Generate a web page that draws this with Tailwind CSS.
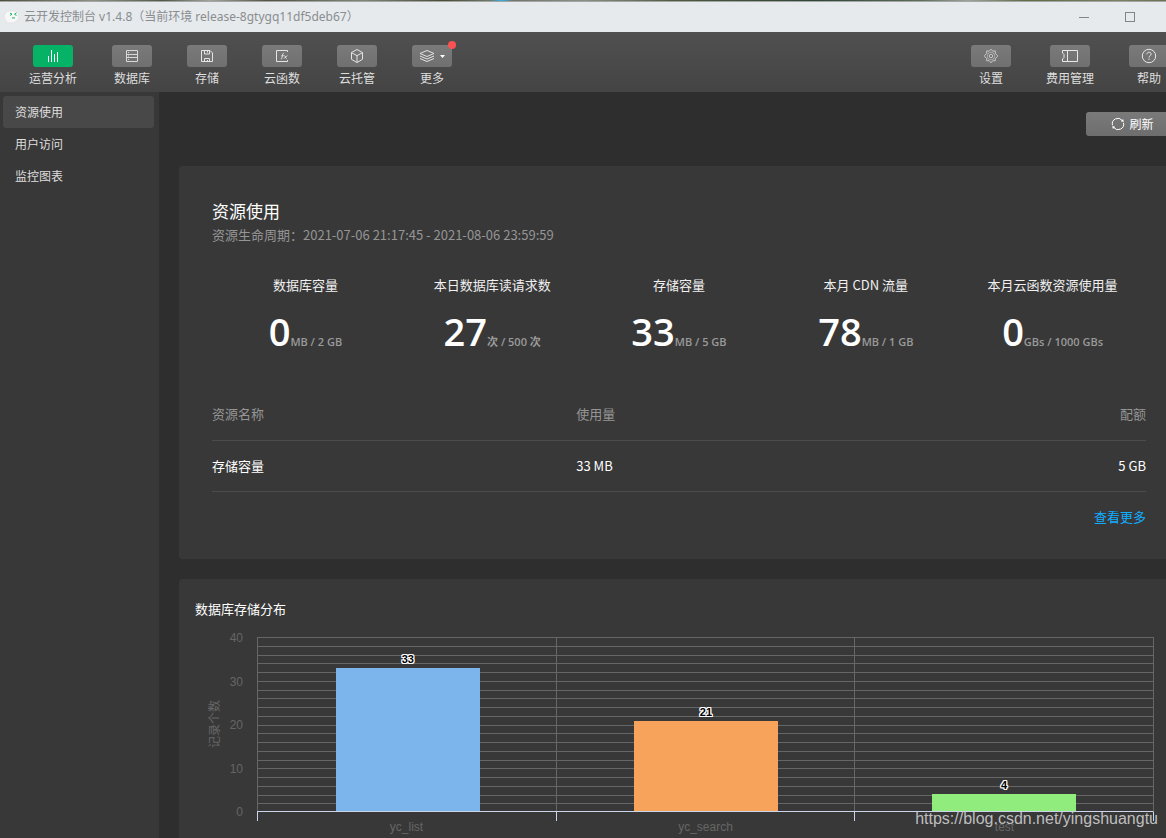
<!DOCTYPE html>
<html lang="zh-CN">
<head>
<meta charset="utf-8">
<title>云开发控制台</title>
<script src="https://cdn.jsdelivr.net/npm/@tailwindcss/browser@4"></script>
</head>
<body class="h-screen overflow-hidden bg-[#2e2e2e] font-['Noto_Sans_CJK_SC',sans-serif] text-xs text-[#dedede]">
<div class="relative flex h-screen flex-col overflow-hidden">

  <!-- Desktop edge above the window -->
  <div class="h-px shrink-0 bg-[linear-gradient(90deg,#4b4f38,#8d9184_8%,#4f5a48_14%,#a3a49c_18%,#525340_23%,#7f8878_31%,#4a4c34_38%,#6d7a66_42%,#2fb0e6_43%,#73756a_44%,#8a9184_50%,#4d5a3c_58%,#2f4636_70%,#5c6e5a_79%,#9da39a_83%,#5e6c45_88%,#7b8060_96%,#6b7050)]"></div>

  <!-- Title bar -->
  <header class="flex h-[31px] shrink-0 items-center justify-between border-t border-[#a2a4a5] bg-[#e6eaed] pr-[31px] pl-1 text-[#8a8d8f]">
    <div class="flex items-center gap-[5px]">
      <svg class="size-[15px]" viewBox="0 0 15 15" aria-hidden="true"><path d="M7.500 .7C3.400.7.3 3.500 .3 6.800c0 2.100 1.200 3.800 2.900 4.900l-.4 2 2.400-1.200c.7.2 1.500.3 2.300.3 4 0 7.200-2.700 7.200-6S11.500.7 7.500.7z" fill="#f7f7f7" stroke="#dcdcdc" stroke-width=".5"/><path d="M6 3l2 1.200-2 1.300M12.500 3l-2 1.200 2 1.300M8 7.900h3" fill="none" stroke="#18b566"/></svg>
      <h1 class="flex font-['Noto_Sans','Noto_Sans_CJK_SC',sans-serif] text-xs leading-4 font-normal whitespace-pre">云开发控制台 v1.4.8（当前环境 release-8gtygq11df5deb67）</h1>
    </div>
    <div class="flex items-center gap-9">
      <button aria-label="最小化" class="flex h-3 w-[10px] items-center"><span class="h-px w-full bg-[#858585]"></span></button>
      <button aria-label="最大化" class="size-[10px] border border-[#858585]"></button>
    </div>
  </header>

  <!-- Content is a little wider than the window, the right edge is cut off -->
  <div class="flex min-h-0 w-[calc(100%+12px)] flex-1 flex-col">
    <nav class="flex h-[60px] shrink-0 justify-between bg-linear-to-b from-[#505050] to-[#444444] pt-[13px] pr-[9px] pl-[29px]">
      <div class="flex items-start gap-[35px]">
        <button class="flex flex-col items-center gap-[3px]">
          <span class="flex h-[22px] w-10 items-center justify-center rounded-[3px] bg-[#06b266]"><svg class="size-4" viewBox="0 0 16 16" fill="none" stroke="#fff"><path d="M3.500 8v6M6.500 2v12M9.500 6v8M12.500 4v10" /></svg></span>
          <span class="leading-4">运营分析</span>
        </button>
        <button class="flex flex-col items-center gap-[3px]">
          <span class="flex h-[22px] w-10 items-center justify-center rounded-[3px] bg-linear-to-b from-[#7a7a7a] to-[#707070]"><svg class="size-4" viewBox="0 0 16 16" fill="none" stroke="#d8d8d8"><path d="M2.500 2.500h11v11h-11zM2.500 6.500h11M2.500 9.500h11M4 4.500h1M4 8h1M4 11.500h1"/></svg></span>
          <span class="leading-4">数据库</span>
        </button>
        <button class="flex flex-col items-center gap-[3px]">
          <span class="flex h-[22px] w-10 items-center justify-center rounded-[3px] bg-linear-to-b from-[#7a7a7a] to-[#707070]"><svg class="size-4" viewBox="0 0 16 16" fill="none" stroke="#e4e4e4"><path d="M2.500 2.500h8.500l2.500 2.500v8.500h-11zM5.500 2.500v3.500h5v-3.500M8.500 3v1.500M5.500 13.500v-3h5v3M8.500 12v1.500"/></svg></span>
          <span class="leading-4">存储</span>
        </button>
        <button class="flex flex-col items-center gap-[3px]">
          <span class="flex h-[22px] w-10 items-center justify-center rounded-[3px] bg-linear-to-b from-[#7a7a7a] to-[#707070]"><svg class="size-4" viewBox="0 0 16 16" fill="none" stroke="#e4e4e4"><path d="M13.500 4v-1.500h-11v11h11v-1.500"/><path d="M6.800 11c.8.2 1-.5 1.200-1.500l.6-3c.2-.9.600-1.200 1.300-1M7.500 7.700h2.200M10.500 7.600c1 0 .8 2.900 2 2.900M13.200 7.500l-3 3"/></svg></span>
          <span class="leading-4">云函数</span>
        </button>
        <button class="flex flex-col items-center gap-[3px]">
          <span class="flex h-[22px] w-10 items-center justify-center rounded-[3px] bg-linear-to-b from-[#7a7a7a] to-[#707070]"><svg class="size-4" viewBox="0 0 16 16" fill="none" stroke="#e4e4e4" stroke-linejoin="round"><path d="M8 1.500l5.500 3v6.800l-5.500 3.200-5.500-3.200V4.500zM2.500 4.600L8 7.700l5.500-3.100M8 7.700v6.600"/></svg></span>
          <span class="leading-4">云托管</span>
        </button>
        <button class="relative flex flex-col items-center gap-[3px]">
          <span class="flex h-[22px] w-10 items-center justify-center gap-[5px] rounded-[3px] bg-linear-to-b from-[#7a7a7a] to-[#707070]"><svg class="size-4" viewBox="0 0 16 16" fill="none" stroke="#e4e4e4" stroke-linejoin="round"><path d="M8 2.500l7 3-7 3-7-3zM1 8l7 3 7-3M1 10.500l7 3 7-3"/></svg><svg class="h-[3px] w-[5px]" viewBox="0 0 5 3" fill="#fff"><path d="M0 0h5L2.500 3z"/></svg></span>
          <span class="leading-4">更多</span>
          <span class="absolute -top-1 -right-1 size-2 rounded-full bg-[#fa5151]"></span>
        </button>
      </div>
      <div class="flex items-start gap-[35px]">
        <button class="flex flex-col items-center gap-[3px]">
          <span class="flex h-[22px] w-10 items-center justify-center rounded-[3px] bg-linear-to-b from-[#7a7a7a] to-[#707070]"><svg class="size-4" viewBox="0 0 16 16" fill="none" stroke="#cfcfcf" stroke-width=".9" stroke-linejoin="round"><path d="M8 1.200l1.700 1.900 2.600-.2v2.600L14.500 7.500v1L12.300 10.500v2.300l-2.600-.1L8 14.800l-1.700-2.100-2.600.1v-2.300L1.500 8.500v-1L3.700 5.500V2.900l2.600.2z"/><circle cx="8" cy="8" r="3.800" stroke-width=".6"/><circle cx="8" cy="8" r="1.700"/></svg></span>
          <span class="leading-4">设置</span>
        </button>
        <button class="flex flex-col items-center gap-[3px]">
          <span class="flex h-[22px] w-10 items-center justify-center rounded-[3px] bg-linear-to-b from-[#7a7a7a] to-[#707070]"><svg class="size-4" viewBox="0 0 16 16" fill="none" stroke="#e8e8e8"><path d="M.5 2.500h15v11H.5v-2.500l1.500-1.500v-3l-1.500-1.500z"/><path d="M5.500 3v10"/></svg></span>
          <span class="leading-4">费用管理</span>
        </button>
        <button class="flex flex-col items-center gap-[3px]">
          <span class="flex h-[22px] w-10 items-center justify-center rounded-[3px] bg-linear-to-b from-[#7a7a7a] to-[#707070]"><svg class="size-4" viewBox="0 0 16 16" fill="none" stroke="#e8e8e8"><circle cx="8" cy="8" r="6.700"/><path d="M5.900 6.300c0-2.800 4.300-2.700 4.200-.2 0 1.600-2.100 1.600-2.100 3.400M8 10.600v1.300"/></svg></span>
          <span class="leading-4">帮助</span>
        </button>
      </div>
    </nav>

    <div class="flex min-h-0 flex-1">
      <aside class="w-[159px] shrink-0 bg-[#383838] pt-1 pr-[5px] pl-[3px]">
        <a href="#" class="flex h-8 items-center rounded-[3px] bg-[#484848] pl-3">资源使用</a>
        <a href="#" class="flex h-8 items-center pl-3">用户访问</a>
        <a href="#" class="flex h-8 items-center pl-3">监控图表</a>
      </aside>

      <main class="flex min-w-0 flex-1 flex-col pt-5 pl-5">
        <button class="flex h-6 w-[92px] shrink-0 items-center justify-center gap-1 self-end rounded-[3px] bg-linear-to-b from-[#7a7a7a] to-[#6e6e6e] pl-px text-white">
          <svg class="size-[14px]" viewBox="0 0 14 14" fill="none" stroke="#fff"><path d="M1.500 8.200A5.500 5.500 0 0 1 11.200 3.500M12.500 5.800A5.500 5.500 0 0 1 2.800 10.500"/><path d="M9.800 4.300l3 .6-.7-2.900zM4.200 9.700l-3-.6.7 2.900z" fill="#fff" stroke="none"/></svg>刷新</button>

        <section class="mt-[30px] h-[393px] shrink-0 rounded-[3px] bg-[#383838] pt-8 pr-8 pl-[33px]">
          <h2 class="text-[17px] leading-[26px] text-white">资源使用</h2>
          <p class="text-[13px] leading-[22px] text-[#959595]">资源生命周期：2021-07-06 21:17:45 - 2021-08-06 23:59:59</p>
          <dl class="mt-[29px] grid grid-cols-5 text-center">
            <div><dt class="text-[13px] leading-5 text-[#f0f0f0]">数据库容量</dt><dd class="mt-[10px] font-['Open_Sans','Noto_Sans_CJK_SC',sans-serif] text-[11px] leading-[52px] font-semibold text-[#9a9a9a]"><span class="text-[38px] text-white">0</span>MB / 2 GB</dd></div>
            <div><dt class="text-[13px] leading-5 text-[#f0f0f0]">本日数据库读请求数</dt><dd class="mt-[10px] font-['Open_Sans','Noto_Sans_CJK_SC',sans-serif] text-[11px] leading-[52px] font-semibold text-[#9a9a9a]"><span class="text-[38px] text-white">27</span>次 / 500 次</dd></div>
            <div><dt class="text-[13px] leading-5 text-[#f0f0f0]">存储容量</dt><dd class="mt-[10px] font-['Open_Sans','Noto_Sans_CJK_SC',sans-serif] text-[11px] leading-[52px] font-semibold text-[#9a9a9a]"><span class="text-[38px] text-white">33</span>MB / 5 GB</dd></div>
            <div><dt class="text-[13px] leading-5 text-[#f0f0f0]">本月 CDN 流量</dt><dd class="mt-[10px] font-['Open_Sans','Noto_Sans_CJK_SC',sans-serif] text-[11px] leading-[52px] font-semibold text-[#9a9a9a]"><span class="text-[38px] text-white">78</span>MB / 1 GB</dd></div>
            <div><dt class="text-[13px] leading-5 text-[#f0f0f0]">本月云函数资源使用量</dt><dd class="mt-[10px] font-['Open_Sans','Noto_Sans_CJK_SC',sans-serif] text-[11px] leading-[52px] font-semibold text-[#9a9a9a]"><span class="text-[38px] text-white">0</span>GBs / 1000 GBs</dd></div>
          </dl>
          <table class="mt-[21px] w-full table-fixed text-left text-[13px] leading-5">
            <thead><tr class="h-[51px] border-b border-[#4c4c4c] text-[#959595]"><th class="w-[39%] font-normal">资源名称</th><th class="font-normal">使用量</th><th class="text-right font-normal">配额</th></tr></thead>
            <tbody><tr class="h-[51px] border-b border-[#4c4c4c] text-white"><td>存储容量</td><td>33 MB</td><td class="text-right">5 GB</td></tr></tbody>
          </table>
          <div class="flex h-[51px] items-center justify-end"><a href="#" class="text-[13px] leading-5 text-[#10aeff]">查看更多</a></div>
        </section>

        <section class="mt-5 flex-1 rounded-t-[3px] bg-[#383838] pt-5 pr-6 pl-4">
          <h2 class="text-[13px] leading-5 text-white">数据库存储分布</h2>
          <div class="mt-[18px] flex font-['Liberation_Sans','Noto_Sans_CJK_SC',sans-serif] text-[#666666]">
            <div class="flex h-[175px] w-8 items-center justify-center pl-2"><span class="rotate-180 leading-4 [text-orientation:sideways] [writing-mode:vertical-rl]">记录个数</span></div>
            <div class="-my-[7px] mr-[14px] flex h-[190px] w-4 flex-col justify-between text-right leading-4"><span>40</span><span>30</span><span>20</span><span>10</span><span>0</span></div>
            <div class="min-w-0 flex-1">
              <div class="relative h-[175px]">
                <div id="gridlines" class="absolute inset-0 flex flex-col"></div>
                <div class="relative grid h-full grid-cols-3 border-r border-b border-r-[#666666] border-b-[#ccd6eb]">
                  <div class="flex flex-col items-center justify-end border-l border-[#666666] pl-0.5"><b class="text-[11px] leading-[18px] text-black [text-shadow:1px_0_#fff,-1px_0_#fff,0_1px_#fff,0_-1px_#fff,1px_1px_#fff,-1px_-1px_#fff,1px_-1px_#fff,-1px_1px_#fff]">33</b><div class="w-[144px] bg-[#7cb5ec]" style="height:82%"></div></div>
                  <div class="flex flex-col items-center justify-end border-l border-[#666666] pl-px"><b class="text-[11px] leading-[18px] text-black [text-shadow:1px_0_#fff,-1px_0_#fff,0_1px_#fff,0_-1px_#fff,1px_1px_#fff,-1px_-1px_#fff,1px_-1px_#fff,-1px_1px_#fff]">21</b><div class="w-[144px] bg-[#f7a35c]" style="height:52%"></div></div>
                  <div class="flex flex-col items-center justify-end border-l border-[#666666]"><b class="text-[11px] leading-[18px] text-black [text-shadow:1px_0_#fff,-1px_0_#fff,0_1px_#fff,0_-1px_#fff,1px_1px_#fff,-1px_-1px_#fff,1px_-1px_#fff,-1px_1px_#fff]">4</b><div class="w-[144px] bg-[#90ed7d]" style="height:9.5%"></div></div>
                </div>
              </div>
              <div class="grid h-[9px] grid-cols-3 border-r border-[#ccd6eb]"><div class="border-l border-[#ccd6eb]"></div><div class="border-l border-[#ccd6eb]"></div><div class="border-l border-[#ccd6eb]"></div></div>
              <div class="-mt-0.5 grid grid-cols-3 text-center leading-4"><span>yc_list</span><span>yc_search</span><span>test</span></div>
            </div>
          </div>
        </section>
      </main>
    </div>
  </div>

  <div class="absolute right-2 bottom-2 font-['Liberation_Sans',sans-serif] text-base leading-[22px] text-[#d0d0d0]/90">https://blog.csdn.net/yingshuangtu</div>
</div>
<script>
  const grid = document.getElementById('gridlines');
  for (let i = 0; i < 20; i++) {
    const line = document.createElement('div');
    line.className = 'flex-1 border-t border-[#666666]';
    grid.append(line);
  }
</script>
</body>
</html>
